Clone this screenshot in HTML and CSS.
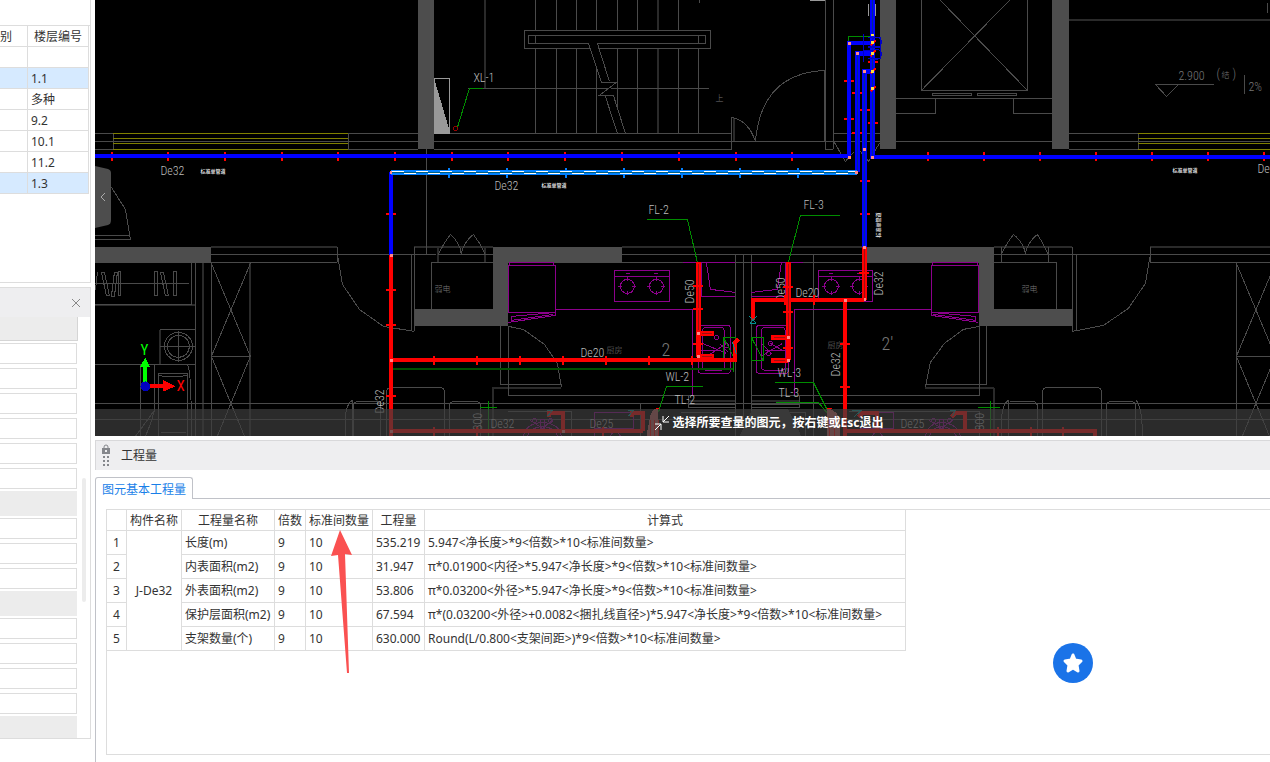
FILE: index.html
```html
<!DOCTYPE html>
<html lang="zh-CN">
<head>
    <meta charset="UTF-8">
    <meta name="viewport" content="width=device-width, initial-scale=1.0">
    <title>工程量</title>
    <link rel="stylesheet" href="styles.css">
</head>
<body>

<aside class="sidebar">
    <section class="floor-panel">
        <table class="floor-table">
            <tr><th class="type-col">别</th><th>楼层编号</th></tr>
            <tr><td></td><td></td></tr>
            <tr class="selected"><td></td><td>1.1</td></tr>
            <tr><td></td><td>多种</td></tr>
            <tr><td></td><td>9.2</td></tr>
            <tr><td></td><td>10.1</td></tr>
            <tr><td></td><td>11.2</td></tr>
            <tr class="selected"><td></td><td>1.3</td></tr>
        </table>
    </section>

    <section class="prop-panel">
        <div class="prop-header">
            <button class="close-btn" aria-label="关闭">
                <svg width="10" height="10" viewBox="0 0 10 10"><path d="M1 1L9 9M9 1L1 9"/></svg>
            </button>
        </div>
        <div class="prop-title"></div>
        <div class="prop-list">
            <div class="prop-row"><input type="text" aria-label="属性 1"></div>
            <div class="prop-row"><input type="text" aria-label="属性 2"></div>
            <div class="prop-row"><input type="text" aria-label="属性 3"></div>
            <div class="prop-row"><input type="text" aria-label="属性 4"></div>
            <div class="prop-row"><input type="text" aria-label="属性 5"></div>
            <div class="prop-row"><input type="text" aria-label="属性 6"></div>
            <div class="prop-row group"></div>
            <div class="prop-row"><input type="text" aria-label="属性 7"></div>
            <div class="prop-row"><input type="text" aria-label="属性 8"></div>
            <div class="prop-row"><input type="text" aria-label="属性 9"></div>
            <div class="prop-row group"></div>
            <div class="prop-row"><input type="text" aria-label="属性 10"></div>
            <div class="prop-row"><input type="text" aria-label="属性 11"></div>
            <div class="prop-row"><input type="text" aria-label="属性 12"></div>
            <div class="prop-row"><input type="text" aria-label="属性 13"></div>
            <div class="prop-row group"></div>
        </div>
        <div class="scroll-thumb"></div>
    </section>
</aside>

<main class="main">
    <div class="canvas">
        <svg class="drawing" viewBox="94.6 -0.4 1175 436" preserveAspectRatio="xMinYMin slice">
            <!-- walls -->
            <g class="wall">
                <path d="M418 0h16v149h-16zM880 0h16v149h-16zM1052 0h17v149h-17z"/>
                <path d="M94 247h117v16h-117z"/>
                <path d="M493 247h129v16h-114v63h-94v-17h79z"/>
                <path d="M866 247h128v62h78v17h-93v-63h-113z"/>
            </g>

            <!-- dim double lines -->
            <g class="dim">
                <path d="M485 0v88M658 0v30M658 48v85M734 118v23M1069 20h201"/>
                <path d="M211 247h126M414 247h79M622 247h242M994 247h78M1150 247h120"/>
                <path d="M203 263v173M250 263v173M95 305h100M492 388h69M493 388v48M925 388h69M994 388v48"/>
                <path d="M160 330v34M688 401h47M751 401h48M438 247v15M485 247v15"/>
            </g>

            <!-- architecture lines -->
            <g class="line">
                <path d="M94 133h19M348 133h70M94 141h324M94 149h19M348 149h70M113 133v16M348 133v16"/>
                <path d="M434 133h298M434 141h446M434 149h298M833 133h47M825 149h8M731 117v32M825 0v149M833 0v149"/>
                <path d="M731 117Q748 120 755 141Q761 73 824 70V141"/>
                <path d="M535 0v133M556 0v133M576 0v133M596 0v133M617 0v133M637 0v133M678 0v133M698 48v85M699 0v3M468 88h241"/>
                <path class="mask" d="M524 30h186v18h-186z"/>
                <path d="M528 35h177v8h-177zM535 35v8M698 35v8"/>
                <path class="mask" d="M588 43L601 82L616 82L599 95L605 96L617 133H625L613 95L609 81L597 43z" stroke="none"/>
                <path d="M588 43L601 82H616L599 95H613L625 133M597 43L609 81M605 96L617 133"/>
                <path d="M921 0V90H1027V0M940 0L1027 90M1009 0L921 90M932 93h39v2h-39zM977 93h39v2h-39z"/>
                <path d="M896 98H1052M935 98V113H896M1013 98V113H1052M896 141h156"/>
                <path d="M1069 133h69M1069 141h201M1069 149h69M1138 133v16M1214 84H1155L1166 96L1178 84M1244 75v19"/>
                <path d="M1267 3v10M834 142L845 161L853 152M860 151L868 161L879 143"/>
                <path d="M426 149v105M111 187L125 209L130 239H94M94 235h36"/>
                <path d="M211 254h225M438 254h47M485 254h8M622 254h242M994 254h276M211 262h126M622 262h242M337 247v15M414 247v84M411 254v77"/>
                <path d="M337 254L342 284L359 309L383 326L414 331"/>
                <path d="M493 262H431V309M438 254Q443 243 450 234Q460 243 461 254Q462 243 473 234Q480 243 485 254"/>
                <path d="M500 326V384H561V387L557 363L544 344L523 329L508 326V395H735"/>
                <path d="M94 403h1176M94 419h1176"/>
                <path d="M191 263v41H94M195 263v173M211 263v173M94 283h95M211 263L250 356L211 450M250 263L211 356L250 450M211 356h39"/>
                <path d="M95 290l2-18M101 272l5 23h3l-5-23zM111 296l3-24h3l-3 24zM118 271h2v24h-2zM154 271h3v24h-3zM160 272l5 23h3l-5-23zM173 271h3v24h-3z"/>
                <path d="M160 329h35M94 364h101M160 346h35M178 331v31M140 364v72M154 364V410L135 436M154 410Q150 425 145 436M158 436V373H187V436M158 375Q172 378 187 375M187 364Q191 368 191 436M161 432h25"/>
                <circle cx="178" cy="346" r="14"/><circle cx="178" cy="346" r="11"/>
                <path d="M735 254v182M743 254v182M751 254v182M813 254v182M751 395H979V326M986 326V384H925V387L930 362L944 343L963 329L979 326"/>
                <path d="M688 395v12h47M751 407h48v-12M688 404h47M751 404h48M640 404v32M681 412h54v24M751 412h54v24"/>
                <path d="M994 262h62v47M1001 247v15M1048 247v15M1001 254Q1006 243 1013 234Q1024 243 1025 254Q1026 243 1037 234Q1043 243 1048 254"/>
                <path d="M1072 247v84L1103 325L1128 308L1145 283L1150 254M1076 254v77M1150 247v15h120"/>
                <path d="M1236 262v174M1236 263L1275 356L1236 450M1275 263L1236 356L1275 450M1236 356h34"/>
                <path d="M386 436V392Q386 387 391 387H439Q444 387 444 392V436M449 436V406Q449 401 454 401H475Q480 401 480 406V436"/>
                <path d="M353 436V404Q354 401 360 401H380V436M345 436V415Q347 402 352 400V436"/>
                <path d="M1042 436V392Q1042 387 1047 387H1096Q1101 387 1101 392V436M1001 436V420Q1002 403 1008 400V436M1010 401H1032Q1037 401 1037 407V436"/>
                <path d="M1106 436V406Q1106 401 1111 401H1130Q1135 401 1135 406V436M1136 400Q1142 408 1142 436"/>
                <path d="M508 411H571V436M849 411H979V436"/>
            </g>
            <path class="floor-mark" d="M739 436L752 409H788L801 436z"/>

            <!-- windows -->
            <path class="window" d="M113 133h235M113 138h235M113 143h235M113 149h235M1138 133h132M1138 138h132M1138 143h132M1138 149h132"/>

            <!-- hydrant box -->
            <path class="box" d="M434 78h15v55h-15z"/>
            <path class="box-fill" d="M434 79L450 133H434z"/>
            <path class="box" d="M810 0h15M868 4v12M875 4v12M870 5h4"/>

            <!-- fixtures -->
            <g class="fixture">
                <path d="M508 265h47v47h-47zM509 265v-3h44v3M508 322L555 315V312L511 316V320L553 314M555 309H692V395"/>
                <path d="M931 265h47v47h-47zM932 265v-3h45v3M978 322L931 315V312L975 316V320L933 314M931 309H794V395"/>
                <path d="M614 270h55v31h-55zM614 276h55M818 270h54v31h-54zM818 276h54"/>
                <circle cx="627" cy="286" r="7"/><circle cx="656" cy="286" r="7"/>
                <circle cx="831" cy="286" r="7"/><circle cx="859" cy="286" r="7"/>
                <path d="M627 277v4M627 291v4M618 286h4M632 286h4M656 277v4M656 291v4M647 286h4M661 286h4M831 277v4M831 291v4M822 286h4M836 286h4M859 277v4M859 291v4M850 286h4M864 286h4"/>
                <path d="M626 273h4M654 273h4M829 273h4M857 273h4"/>
                <path d="M683 262h52M751 262h52M701 262v34h34M706 262L710 289L735 292M785 262v34h-34M781 262L777 289L751 292"/>
                <rect x="698" y="325" width="32" height="48" rx="3"/><rect x="702" y="327" width="22" height="43" rx="4"/>
                <rect x="756" y="325" width="32" height="48" rx="3"/><rect x="761" y="327" width="24" height="43" rx="4"/>
                <path d="M700 350h20M702 343l24 10M708 355l18-12M720 344l8 8M765 350h20M762 355l20-12M762 344l10 10M770 343l14 8"/>
                <circle cx="716" cy="337" r="2"/><circle cx="726" cy="345" r="2"/><circle cx="768" cy="353" r="2"/><circle cx="770" cy="343" r="2"/>
                <path d="M523 436Q525 423 542 422Q559 423 561 436M527 436Q530 427 542 426Q555 427 557 436M530 420L542 428L553 419M540 419h4v9h-4zM594 412h39v16h-39zM594 412v24"/>
                <circle cx="534" cy="420" r="2"/><circle cx="550" cy="420" r="2"/><circle cx="615" cy="437" r="5"/>
                <path d="M925 436Q927 423 941 422Q957 423 960 436M929 436Q932 427 941 426Q953 427 956 436M929 420L941 428L953 419M939 419h4v9h-4zM860 412h33v16h-33"/>
                <circle cx="933" cy="420" r="2"/><circle cx="949" cy="420" r="2"/><circle cx="877" cy="437" r="5"/>
            </g>

            <!-- leaders -->
            <g class="leader">
                <path d="M483 88H469L457 127M647 219H687L697 262M840 215H800L788 262M703 386H666L658 412M775 382H813L828 412M776 402H818L828 414"/>
                <path d="M480 407h17M488 401v35M488 402v10M978 407h22M990 401v35M848 43V36H872"/>
                <path d="M723 337h12v23h-12zM723 337l12 23M751 337h12v23h-12zM751 337l12 23M733 360v12"/>
            </g>
            <path class="drain" d="M393 369h340"/>
            <circle class="hydrant" cx="455" cy="128" r="2"/>

            <!-- labels -->
            <g class="label">
                <text x="473" y="82">XL-1</text>
                <text x="160" y="175">De32</text>
                <text x="494" y="190">De32</text>
                <text x="1257" y="173">De3</text>
                <text x="648" y="214">FL-2</text>
                <text x="803" y="209">FL-3</text>
                <text x="580" y="357">De20</text>
                <text x="795" y="297">De20</text>
                <text x="665" y="381">WL-2</text>
                <text x="674" y="404">TL-2</text>
                <text x="777" y="377">WL-3</text>
                <text x="778" y="397">TL-3</text>
                <text transform="translate(694 303) rotate(-90)">De50</text>
                <text transform="translate(785 301) rotate(-90)">De50</text>
                <text transform="translate(883 295) rotate(-90)">De32</text>
                <text transform="translate(840 376) rotate(-90)">De32</text>
                <text transform="translate(384 413) rotate(-90)">De32</text>
                <text x="490" y="428">De32</text>
                <text x="589" y="428">De25</text>
                <text x="900" y="428">De25</text>
                <text transform="translate(482 430) rotate(-90)">800</text>
                <text transform="translate(984 430) rotate(-90)">800</text>
            </g>
            <g class="pipe-note">
                <text x="200" y="173">标准单管道</text>
                <text x="541" y="187">标准单管道</text>
                <text x="1172" y="172">标准单管道</text>
                <text transform="translate(880 237) rotate(-90)">标准单管道</text>
            </g>
            <g class="label room">
                <text x="1178" y="80">2.900</text>
                <text x="1248" y="91">2%</text>
                <text x="1216" y="78">(</text><text x="1232" y="78">)</text>
                <text class="cjk" x="1221" y="78">结</text>
                <text class="cjk" x="715" y="101">上</text>
                <text class="cjk" x="434" y="292">弱电</text>
                <text class="cjk" x="1021" y="292">弱电</text>
                <text class="cjk" x="606" y="353">厨房</text>
                <text class="cjk" x="827" y="348">厨房</text>
                <text class="big" x="661" y="356">2</text>
                <text class="big" x="881" y="350">2'</text>
            </g>

            <!-- cold water mains -->
            <path class="tick" d="M112 152v9M168 152v9M225 152v9M282 152v9M338 152v9M395 152v9M452 152v9M508 152v9M565 152v9M622 152v9M679 152v9M736 152v9M792 152v9M928 152v9M984 152v9M1040 152v9M1096 152v9M1152 152v9M1208 152v9M1264 152v9"/>
            <path class="tick" d="M386 214h10M844 81h10M844 119h10M852 93h10M852 133h10M860 110h10M860 181h10M860 214h10M868 62h10M868 123h10"/>
            <path class="cold" d="M94 156H849V43H872M872 157H1270M391 172V255"/>
            <path class="cold wide" d="M872 0V159M857 172V53H872M864 247V71H872"/>
            <path class="cold-core" d="M857 172V53M864 247V71M872 0V157"/>
            <path class="cold-thin" d="M863 34v28M864 50h10M868 37h12v10h-12M868 46h12v12h-12"/>
            <circle class="cold-thin" cx="876" cy="42" r="5"/><circle class="cold-thin" cx="876" cy="54" r="5"/>
            <path class="valve" d="M870 45l5-5M870 56l5-6M870 73l5-5M870 91l5-5"/>
            <path class="joint-y" d="M871 42h3M871 53h3M871 71h3M871 88h3M872 34v2"/>

            <!-- selected pipe -->
            <path class="sel-tick" d="M449 168v10M507 168v10M566 168v10M624 168v10M682 168v10M740 168v10M798 168v10"/>
            <path class="sel" d="M391 172H857"/>
            <path class="sel-core" d="M391 172H856"/>
            <path class="sel-dash" d="M392 171H857"/>
            <path class="sel-dash alt" d="M392 173H857"/>

            <!-- hot water -->
            <path class="hot" d="M391 255V436M391 360H735V342L738 339M753 320V300H864M845 300V436M391 431H643M845 431H1095V436"/>
            <path class="hot wide" d="M698 262V357M788 262V360M864 247V300M698 333H714M698 356H714M788 337H771M788 360H771"/>
            <path class="hot-core" d="M698 264V330M788 264V335M864 249V298M702 333H712M702 356H712M785 337H774M785 360H774"/>
            <path class="hot" d="M549 417V413H563V431M632 417V413H643V431M858 417L862 413H877V431M951 417L955 413H965V431"/>
            <path class="tick" d="M386 290h10M386 325h10M386 396h10M434 356v9M477 356v9M520 356v9M563 356v9M606 356v9M649 356v9M692 356v9M693 286h10M693 309h10M693 344h10M783 287h10M783 312h10M783 348h10M785 295v10M814 295v10M859 273h10M840 344h10M840 387h10M434 427v9M477 427v9M603 427v9M998 427v9M1031 427v9M1063 427v9"/>
            <path class="riser" d="M649 420Q650 408 658 408V436H646zM827 408Q837 410 840 420V436H827z"/>
            <path class="riser-top" d="M656 408h3M827 408h5M650 420v16M654 420v16M658 420v16M829 420v16M834 420v16"/>
            <path class="equip" d="M749 316l7 7M756 316l-7 7M750 323h6M732 342l4 12M547 410h5l-5 6M628 410h5l-5 6M852 410h9l-7 6M950 410h5l-3 6"/>
            <path class="joint" d="M390 255h3M390 360h3M390 431h3M697 333h3M697 356h3M787 337h3M787 360h3M844 300h3M863 247h3M848 43h3M856 53h3M863 71h3M848 157h3M871 157h3M863 149h3M855 172h3M864 299h2M562 431h3M390 172h2"/>

            <!-- axis -->
            <path d="M149 386h14" class="axis-x"/>
            <path d="M163 380L175 386L163 391z" fill="#f00"/>
            <path d="M145 382V366" class="axis-y"/>
            <path d="M139 367L145 357L150 367z" fill="#0f0"/>
            <circle cx="145" cy="386" r="5" fill="#0000c0"/>
            <text class="axis-label" x="176" y="391" fill="#f00">X</text>
            <text class="axis-label" x="140" y="355" fill="#0f0">Y</text>
        </svg>

        <button class="fold-btn" aria-label="收起">
            <svg width="16" height="62" viewBox="0 0 16 62">
                <path d="M0 0L13 3Q16 4 16 7V54Q16 58 13 59L0 62z" fill="#4d4d4d"/>
                <path d="M10 27L6 31L10 35" fill="none" stroke="#aaa"/>
            </svg>
        </button>

        <div class="hint">
            <svg width="16" height="16" viewBox="0 0 16 16"><path d="M15 1L9 7M9 1V7H15M1 15L7 9M1 9H7V15"/></svg>
            <span>选择所要查量的图元，按右键或Esc退出</span>
        </div>
    </div>

    <section class="quantity">
        <header class="quantity-header">
            <svg width="10" height="23" viewBox="0 0 10 23" fill="#85878c">
                <path d="M3 5V3Q3 1 5 1Q7 1 7 3V5" fill="none" stroke="#85878c"/>
                <path d="M1 4H9V10H1zM2 12h2v2h-2zM6 12h2v2h-2zM2 16h2v2h-2zM6 16h2v2h-2zM2 20h2v2h-2zM6 20h2v2h-2z"/>
                <path d="M4 6h2v2h-2z" fill="#eeeef0"/>
            </svg>
            <span>工程量</span>
        </header>
        <div class="tab-bar">
            <button class="tab">图元基本工程量</button>
        </div>
        <div class="tab-body">
            <div class="table-box">
                <table class="quantity-table">
                    <colgroup>
                        <col class="c-no"><col class="c-part"><col class="c-name"><col class="c-times"><col class="c-std"><col class="c-qty"><col class="c-formula">
                    </colgroup>
                    <tr><th></th><th>构件名称</th><th>工程量名称</th><th>倍数</th><th>标准间数量</th><th>工程量</th><th>计算式</th></tr>
                    <tr><td class="no">1</td><td class="part" rowspan="5">J-De32</td><td>长度(m)</td><td>9</td><td>10</td><td>535.219</td><td>5.947&lt;净长度&gt;*9&lt;倍数&gt;*10&lt;标准间数量&gt;</td></tr>
                    <tr><td class="no">2</td><td>内表面积(m2)</td><td>9</td><td>10</td><td>31.947</td><td>π*0.01900&lt;内径&gt;*5.947&lt;净长度&gt;*9&lt;倍数&gt;*10&lt;标准间数量&gt;</td></tr>
                    <tr><td class="no">3</td><td>外表面积(m2)</td><td>9</td><td>10</td><td>53.806</td><td>π*0.03200&lt;外径&gt;*5.947&lt;净长度&gt;*9&lt;倍数&gt;*10&lt;标准间数量&gt;</td></tr>
                    <tr><td class="no">4</td><td>保护层面积(m2)</td><td>9</td><td>10</td><td>67.594</td><td>π*(0.03200&lt;外径&gt;+0.0082&lt;捆扎线直径&gt;)*5.947&lt;净长度&gt;*9&lt;倍数&gt;*10&lt;标准间数量&gt;</td></tr>
                    <tr><td class="no">5</td><td>支架数量(个)</td><td>9</td><td>10</td><td>630.000</td><td>Round(L/0.800&lt;支架间距&gt;)*9&lt;倍数&gt;*10&lt;标准间数量&gt;</td></tr>
                </table>
                <svg class="pointer" width="22" height="144" viewBox="0 0 22 144"><path d="M9 0L21 25L14 24L18 143H16L7 25L0 26z"/></svg>
            </div>
        </div>
    </section>
</main>

<button class="star-btn" aria-label="收藏">
    <svg width="22" height="22" viewBox="0 0 22 22"><path d="M11 3L13 8L19 9L15 13L16 19L11 16L6 19L7 13L3 9L9 8z"/></svg>
</button>

</body>
</html>
```

FILE: styles.css
```css
* {
    box-sizing: border-box;
}

body {
    margin: 0;
    height: 100vh;
    display: flex;
    gap: 4px;
    overflow: hidden;
    background-color: white;
    color: #333;
    font-family: "Noto Sans", "Noto Sans CJK SC", sans-serif;
    font-size: 12px;
    line-height: 16px;
}

button {
    margin: 0;
    padding: 0;
    border: none;
    background: none;
    font: inherit;
    cursor: pointer;
}

svg {
    display: block;
}

table {
    border-collapse: separate;
    border-spacing: 0;
    table-layout: fixed;
}

th {
    font-weight: normal;
    text-align: center;
}

/* Sidebar */
.sidebar {
    width: 91px;
    flex-shrink: 0;
    display: flex;
    flex-direction: column;
    gap: 4px;
    padding-bottom: 23px;
}

.floor-panel {
    height: 283px;
    flex-shrink: 0;
    padding-top: 25px;
    border-right: 1px solid #ddd;
    border-bottom: 1px solid #ddd;
}

.floor-table {
    width: 100%;
    border-top: 1px solid #ddd;
    padding-right: 1px;
}

.floor-table th,
.floor-table td {
    height: 21px;
    padding: 2px 3px 0;
    border-right: 1px solid #ddd;
    border-bottom: 1px solid #ddd;
    white-space: nowrap;
}

.floor-table .type-col {
    width: 28px;
    padding: 2px 0 0;
    text-align: left;
}

.selected td {
    background-color: #d6eaff;
}

.prop-panel {
    flex: 1;
    min-height: 0;
    position: relative;
    display: flex;
    flex-direction: column;
    overflow: hidden;
    border: 1px solid #ddd;
    border-left: none;
}

.prop-header {
    height: 29px;
    flex-shrink: 0;
    display: flex;
    align-items: center;
    justify-content: flex-end;
    padding-right: 9px;
    background-color: #eeeef0;
}

.close-btn svg {
    fill: none;
    stroke: #888;
}

.prop-title {
    height: 24px;
    flex-shrink: 0;
    margin-right: 12px;
    background-color: #ececec;
    border-right: 1px solid #d5d5d5;
    border-bottom: 1px solid #d5d5d5;
}

.prop-list {
    margin-right: 13px;
}

.prop-row {
    height: 25px;
    padding: 2px 0;
}

.prop-row input {
    display: block;
    width: 100%;
    height: 21px;
    padding: 0 4px;
    border: 1px solid #ddd;
    border-left: none;
    font: inherit;
    outline: none;
}

.group {
    background-color: #ececec;
}

.scroll-thumb {
    position: absolute;
    top: 190px;
    right: 4px;
    width: 4px;
    height: 124px;
    border-radius: 2px;
    background-color: #ececec;
}

/* Drawing area */
.main {
    flex: 1;
    min-width: 0;
    display: flex;
    flex-direction: column;
    gap: 4px;
}

.canvas {
    flex: 1;
    min-height: 0;
    position: relative;
    overflow: hidden;
    background-color: black;
}

.drawing {
    width: 100%;
    height: 100%;
    fill: none;
    shape-rendering: crispEdges;
}

.wall { fill: #4d4d4d; }
.line { stroke: #4a4a4a; }
.dim { stroke: #2a2a2a; stroke-width: 2; }
.mask { fill: black; }
.floor-mark { fill: #303030; }
.window { stroke: #808000; }
.box { stroke: #999; }
.box-fill { fill: #999; }
.fixture { stroke: #8c008c; }
.leader { stroke: #008c00; }
.drain { stroke: #005000; stroke-width: 2; }
.hydrant { stroke: #900; }

.cold { stroke: #0000ff; stroke-width: 4; }
.cold-core { stroke: #002a90; }
.cold-thin { stroke: #0000c8; }
.sel { stroke: #0080ff; stroke-width: 5; }
.sel-core { stroke: #006080; }
.sel-dash { stroke: white; stroke-dasharray: 12 12; }
.alt { stroke-dashoffset: 12; }
.sel-tick { stroke: #0080ff; stroke-width: 2; }
.hot { stroke: #ff0000; stroke-width: 4; }
.wide { stroke-width: 5; }
.hot-core { stroke: #9a1010; stroke-width: 1; }
.tick { stroke: #ff0000; stroke-width: 2; }
.valve { stroke: #ff0000; stroke-width: 2; }
.joint { stroke: #ff8888; stroke-width: 3; }
.joint-y { stroke: #ffe040; stroke-width: 3; }
.riser { fill: #c06060; }
.riser-top { stroke: #ff0000; }
.equip { stroke: #009090; }

.label {
    fill: #bbb;
    font-family: "Roboto Condensed", Roboto, sans-serif;
    font-size: 12px;
    font-weight: 300;
}

.room { fill: #777; }

.cjk {
    font-family: "Noto Sans CJK SC", sans-serif;
    font-size: 8px;
}

.big { font-size: 18px; }

.pipe-note {
    fill: #ddd;
    font-family: "Noto Sans CJK SC", sans-serif;
    font-size: 5px;
    font-weight: bold;
}

.axis-x { stroke: #ff0000; stroke-width: 4; }
.axis-y { stroke: #00ff00; stroke-width: 4; }

.axis-label {
    font-family: "Roboto Condensed", Roboto, sans-serif;
    font-size: 15px;
}

.fold-btn {
    position: absolute;
    top: 166px;
    left: 0;
}

.hint {
    position: absolute;
    left: 0;
    right: 0;
    bottom: 0;
    height: 27px;
    display: flex;
    align-items: center;
    justify-content: center;
    gap: 3px;
    padding-left: 172px;
    background-color: rgba(61, 61, 61, 0.7);
    color: white;
    font-weight: bold;
}

.hint svg {
    fill: none;
    stroke: white;
}

/* Quantity panel */
.quantity {
    height: 322px;
    flex-shrink: 0;
    display: flex;
    flex-direction: column;
}

.quantity-header {
    height: 30px;
    display: flex;
    align-items: center;
    gap: 10px;
    padding-left: 5px;
    background-color: #eeeef0;
    border-top: 1px solid #d8d8da;
    border-left: 1px solid #d8d8da;
}

.tab-bar {
    height: 29px;
    display: flex;
    align-items: flex-end;
}

.tab-bar::after {
    content: "";
    flex: 1;
    border-bottom: 1px solid #c0c2c8;
}

.tab {
    height: 22px;
    padding: 2px 6px 0;
    border: 1px solid #c0c2c8;
    border-bottom: none;
    border-radius: 3px 3px 0 0;
    color: #1a7fe8;
}

.tab-body {
    flex: 1;
    padding: 10px 0 7px 10px;
    border-left: 1px solid #c0c2c8;
}

.table-box {
    height: 100%;
    position: relative;
    border: 1px solid #ddd;
    border-right: none;
}

.quantity-table {
    width: 799px;
}

.quantity-table th,
.quantity-table td {
    height: 24px;
    padding: 0 3px;
    border-right: 1px solid #ddd;
    border-bottom: 1px solid #ddd;
    white-space: nowrap;
}

.quantity-table th {
    height: 21px;
    padding: 2px 0 0;
}

.quantity-table .no,
.quantity-table .part {
    padding: 0;
    text-align: center;
}

.c-no { width: 20px; }
.c-part { width: 55px; }
.c-name { width: 93px; }
.c-times { width: 31px; }
.c-std { width: 67px; }
.c-qty { width: 52px; }

/* Arrow pointing at the column title */
.pointer {
    position: absolute;
    top: 20px;
    left: 224px;
    fill: #fa5151;
}

.star-btn {
    position: fixed;
    right: 177px;
    bottom: 79px;
    width: 40px;
    height: 40px;
    display: flex;
    align-items: center;
    justify-content: center;
    border-radius: 50%;
    background-color: #1a73e8;
}

.star-btn svg {
    fill: white;
    stroke: white;
    stroke-width: 3;
    stroke-linejoin: round;
}
```
